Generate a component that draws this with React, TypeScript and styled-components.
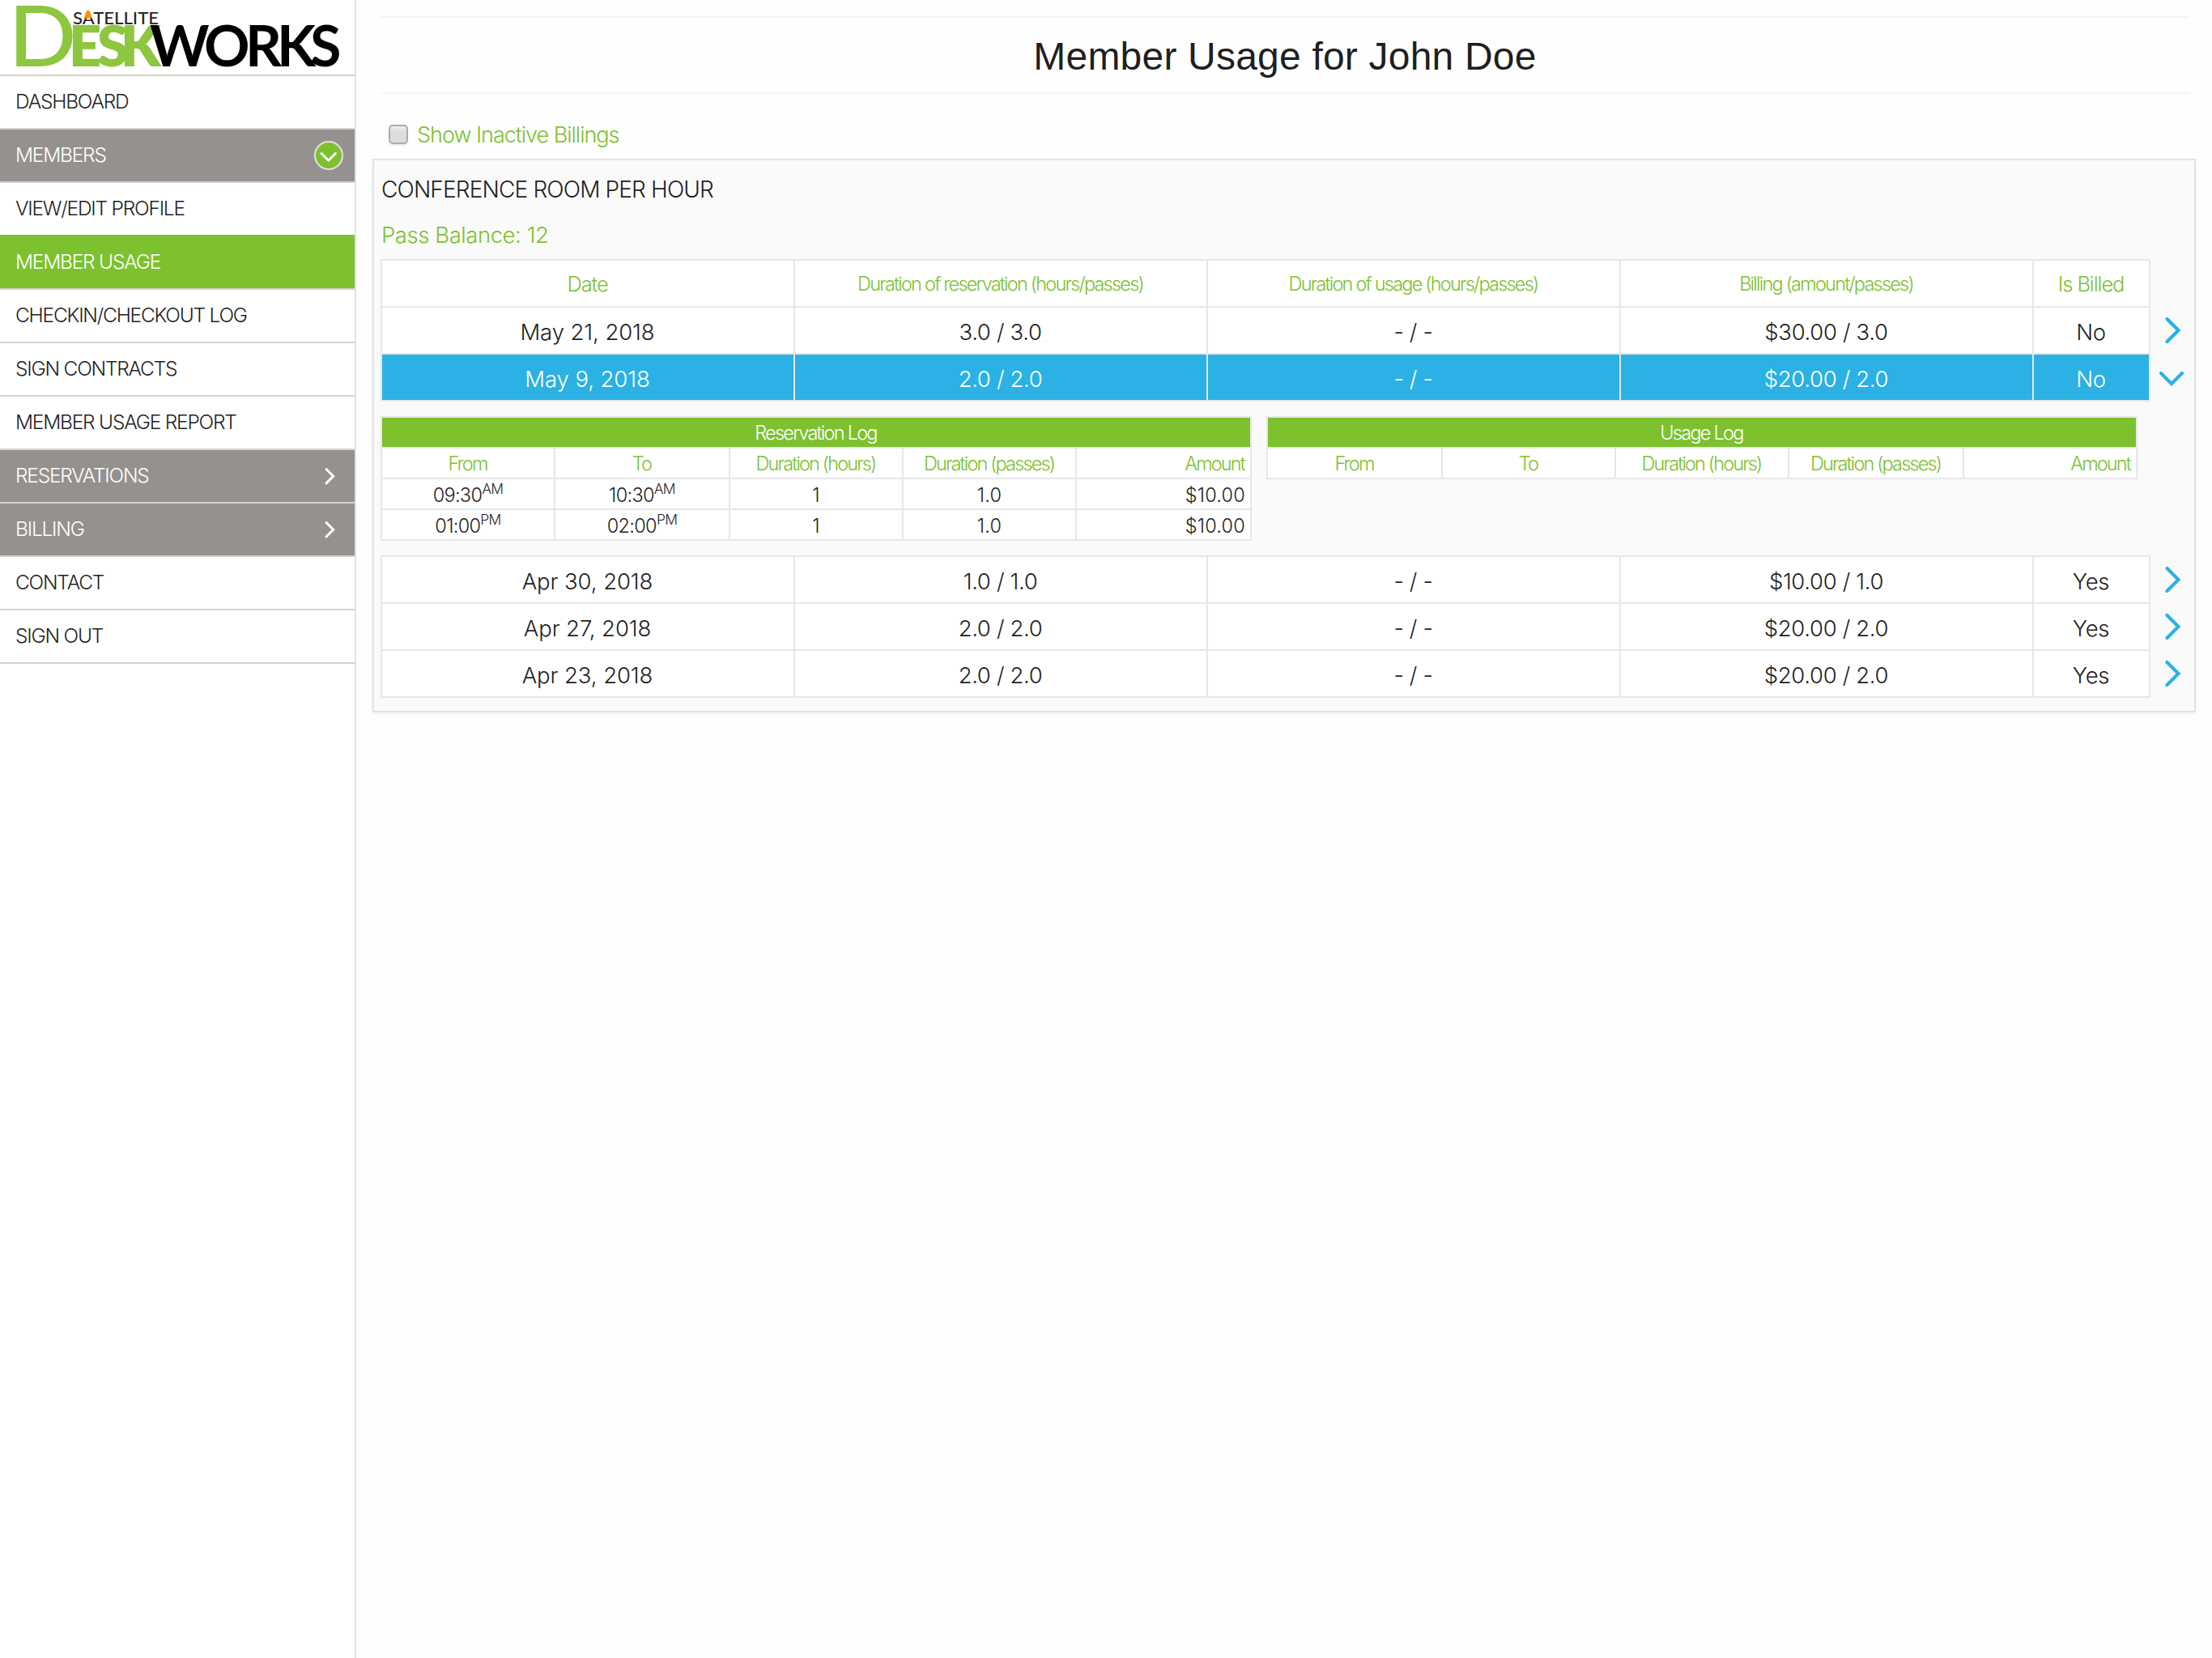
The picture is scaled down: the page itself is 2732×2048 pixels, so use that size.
import * as React from 'react';
import styled, { createGlobalStyle, css } from 'styled-components';

const palette = {
  green: '#7dc12f',
  blue: '#2bb1e3',
  gray: '#95918e',
  line: '#e6e7e8',
  navLine: '#d6d1ce',
  text: '#1f1f1f',
};

const GlobalStyle = createGlobalStyle`
  body {
    margin: 0;
    background: #fefefe;
    color: ${palette.text};
    font-family: Inter, 'Liberation Sans', sans-serif;
    font-weight: 260;
  }
  * {
    box-sizing: border-box;
  }
`;

const PageBlock = styled.div`
  display: flex;
  min-height: 100vh;
`;

/* sidebar */

const Sidebar = styled.aside`
  width: 440px;
  flex-shrink: 0;
  background: white;
  border-right: 2px solid #e2e2e2;
`;

const LogoBlock = styled.div`
  height: 94px;
  border-bottom: 2px solid ${palette.navLine};
  svg {
    display: block;
    overflow: visible;
  }
`;

type NavKind = 'plain' | 'group' | 'active';

const NavItem = styled.a<{ $kind: NavKind; $beforeActive: boolean }>`
  height: 66px;
  display: flex;
  align-items: center;
  justify-content: space-between;
  padding: 0 14px 2px 19px;
  font-size: 24.5px;
  letter-spacing: -1.22px;
  border-bottom: 2px solid
    ${props => (props.$beforeActive ? palette.green : palette.navLine)};
  ${props =>
    props.$kind !== 'plain' &&
    css`
      color: white;
      font-weight: 300;
      background: ${props.$kind === 'group' ? palette.gray : palette.green};
    `}
`;

const NavIcon = styled.svg`
  width: 36px;
  height: 36px;
  margin-top: 2px;
  fill: none;
  stroke: white;
  stroke-width: 3;
  stroke-linecap: round;
`;

/* content */

const Content = styled.main`
  flex: 1;
  padding: 20px 20px 0;
`;

const PageTitle = styled.h1`
  height: 96px;
  margin: 0 8px 0 10px;
  padding-top: 3px;
  display: flex;
  align-items: center;
  justify-content: center;
  border-top: 2px solid #f5f5f5;
  border-bottom: 2px solid #f5f5f5;
  font-family: 'Liberation Sans', Arial, sans-serif;
  font-size: 48px;
  font-weight: 400;
  letter-spacing: 0.2px;
`;

const FilterRow = styled.label`
  height: 80px;
  padding: 20px 0 0 20px;
  display: flex;
  align-items: center;
  gap: 11px;
  color: ${palette.green};
  font-size: 27px;
  font-weight: 300;
  letter-spacing: -1.02px;
`;

const Checkbox = styled.input`
  appearance: none;
  width: 24px;
  height: 24px;
  margin: 0;
  border: 2px solid #acacac;
  border-radius: 5px;
  background: linear-gradient(#ededed, #dcdcdc 40%, #dedede);
  box-shadow: 0 2px 1px rgba(0, 0, 0, 0.07);
`;

const Panel = styled.section`
  padding-bottom: 16px;
  padding-left: 8px;
  border: 2px solid #e3e3e3;
  background: #fafafa;
  box-shadow: 0 2px 5px rgba(0, 0, 0, 0.06);
`;

const PanelTitle = styled.h2`
  height: 64px;
  margin: 0;
  padding: 7px 0 0 1px;
  display: flex;
  align-items: center;
  font-size: 28px;
  font-weight: inherit;
  letter-spacing: -0.84px;
`;

const PassBalance = styled.div`
  height: 58px;
  padding: 0 0 2px 1px;
  display: flex;
  align-items: center;
  color: ${palette.green};
  font-size: 27.5px;
  font-weight: 300;
  letter-spacing: -0.45px;
`;

const Line = styled.div`
  display: flex;
`;

const Row = styled.div<{ $first?: boolean; $selected?: boolean }>`
  display: grid;
  grid-template-columns: 510px 510px 510px 510px 144px;
  border-left: 2px solid ${palette.line};
  border-top: ${props => (props.$first ? `2px solid ${palette.line}` : 'none')};
  background: ${props => (props.$selected ? palette.blue : 'white')};
  ${props =>
    props.$selected &&
    css`
      color: white;
      font-weight: 300;
    `}
`;

const Cell = styled.div<{ $tracking?: number }>`
  height: 58px;
  padding: 4px 1px 0 0;
  display: flex;
  align-items: center;
  justify-content: center;
  border-right: 2px solid ${palette.line};
  border-bottom: 2px solid ${palette.line};
  font-size: 27.5px;
  letter-spacing: ${props => props.$tracking ?? -0.35}px;
`;

const HeadCell = styled(Cell)<{ $small?: boolean }>`
  padding: ${props => (props.$small ? 0 : 1)}px 1px 0 0;
  color: ${palette.green};
  font-size: ${props => (props.$small ? 23.5 : 25.5)}px;
  font-weight: 300;
  letter-spacing: ${props => (props.$small ? -1.78 : -1.1)}px;
`;

const Toggle = styled.button<{ $first?: boolean }>`
  width: 54px;
  height: 56px;
  margin-top: ${props => (props.$first ? 2 : 0)}px;
  padding: 0;
  display: flex;
  align-items: center;
  justify-content: center;
  border: none;
  background: none;
  svg {
    width: 40px;
    height: 40px;
    fill: none;
    stroke: ${palette.blue};
    stroke-width: 4.2;
    stroke-linecap: round;
  }
`;

/* reservation / usage logs */

const Logs = styled.div`
  display: flex;
  align-items: flex-start;
  gap: 18px;
  padding: 18px 0;
`;

const Log = styled.div<{ $columns: string }>`
  display: grid;
  grid-template-columns: ${props => props.$columns};
  border-left: 2px solid ${palette.line};
  border-top: 2px solid ${palette.line};
  background: white;
  font-size: 23.5px;
`;

const LogTitle = styled.div`
  grid-column: 1 / -1;
  height: 38px;
  padding-right: 1px;
  display: flex;
  align-items: center;
  justify-content: center;
  border-right: 2px solid ${palette.line};
  border-bottom: 2px solid ${palette.line};
  background: ${palette.green};
  color: white;
  font-weight: 300;
  letter-spacing: -1.75px;
`;

const LogCell = styled.div<{ $right?: boolean }>`
  height: 38px;
  padding: 3px ${props => (props.$right ? 6 : 0)}px 0 0;
  display: flex;
  align-items: center;
  justify-content: ${props => (props.$right ? 'flex-end' : 'center')};
  border-right: 2px solid ${palette.line};
  border-bottom: 2px solid ${palette.line};
  letter-spacing: 0.2px;
`;

const LogHead = styled(LogCell)`
  padding: 0 ${props => (props.$right ? 7 : 1)}px 0 0;
  color: ${palette.green};
  font-weight: 300;
  letter-spacing: -1.85px;
`;

const TimeText = styled.span`
  letter-spacing: -0.7px;
  sup {
    font-size: 17.5px;
    line-height: 0;
    vertical-align: 10px;
  }
`;

function Logo() {
  return (
    <LogoBlock>
      <svg
        width="438"
        height="92"
        viewBox="0 0 438 92"
        fontFamily="Lato, sans-serif"
      >
        <g fill="#8dc63f">
          <text x="10.5" y="81.5" fontSize="104" fontWeight="500" textLength="84" lengthAdjust="spacingAndGlyphs">
            D
          </text>
          <text x="85 120 149" y="81.5" fontSize="70" fontWeight="800">
            ESK
          </text>
        </g>
        <text x="185 252 303 342 383" y="81.5" fontSize="70" fontWeight="700">
          WORKS
        </text>
        <text x="90" y="30" fontSize="21.5" fontWeight="500" fill="#2b2523" textLength="106" lengthAdjust="spacingAndGlyphs">
          SATELLITE
        </text>
        <path d="M107 13h3.5l3.5 9.5h-10.5z" fill="#ff9100" />
      </svg>
    </LogoBlock>
  );
}

interface NavEntry {
  label: string;
  kind?: NavKind;
  icon?: 'open' | 'closed';
}

const navItems: NavEntry[] = [
  { label: 'DASHBOARD' },
  { label: 'MEMBERS', kind: 'group', icon: 'open' },
  { label: 'VIEW/EDIT PROFILE' },
  { label: 'MEMBER USAGE', kind: 'active' },
  { label: 'CHECKIN/CHECKOUT LOG' },
  { label: 'SIGN CONTRACTS' },
  { label: 'MEMBER USAGE REPORT' },
  { label: 'RESERVATIONS', kind: 'group', icon: 'closed' },
  { label: 'BILLING', kind: 'group', icon: 'closed' },
  { label: 'CONTACT' },
  { label: 'SIGN OUT' },
];

interface Usage {
  date: string;
  reservation: string;
  billing: string;
  billed: string;
}

const recent: Usage[] = [
  { date: 'May 21, 2018', reservation: '3.0 / 3.0', billing: '$30.00 / 3.0', billed: 'No' },
  { date: 'May 9, 2018', reservation: '2.0 / 2.0', billing: '$20.00 / 2.0', billed: 'No' },
];

const older: Usage[] = [
  { date: 'Apr 30, 2018', reservation: '1.0 / 1.0', billing: '$10.00 / 1.0', billed: 'Yes' },
  { date: 'Apr 27, 2018', reservation: '2.0 / 2.0', billing: '$20.00 / 2.0', billed: 'Yes' },
  { date: 'Apr 23, 2018', reservation: '2.0 / 2.0', billing: '$20.00 / 2.0', billed: 'Yes' },
];

const reservations = [
  { from: ['09:30', 'AM'], to: ['10:30', 'AM'] },
  { from: ['01:00', 'PM'], to: ['02:00', 'PM'] },
];

const logHeads = ['From', 'To', 'Duration (hours)', 'Duration (passes)', 'Amount'];

interface UsageRowProps {
  usage: Usage;
  first?: boolean;
  open?: boolean;
}

function UsageRow({ usage, first, open }: UsageRowProps) {
  return (
    <Line>
      <Row $first={first} $selected={open}>
        <Cell $tracking={-0.08}>{usage.date}</Cell>
        <Cell>{usage.reservation}</Cell>
        <Cell>- / -</Cell>
        <Cell>{usage.billing}</Cell>
        <Cell>{usage.billed}</Cell>
      </Row>
      <Toggle $first={first}>
        <svg viewBox="0 0 40 40">
          <path d={open ? 'M6 15l13 13 13-13' : 'M13.5 6l14 14-14 14'} />
        </svg>
      </Toggle>
    </Line>
  );
}

function LogHeader({ title }: { title: string }) {
  return (
    <>
      <LogTitle>{title}</LogTitle>
      {logHeads.map(head => (
        <LogHead key={head} $right={head === 'Amount'}>
          {head}
        </LogHead>
      ))}
    </>
  );
}

function Time({ value }: { value: string[] }) {
  return (
    <TimeText>
      {value[0]}
      <sup>{value[1]}</sup>
    </TimeText>
  );
}

function App() {
  return (
    <PageBlock>
      <GlobalStyle />
      <Sidebar>
        <Logo />
        {navItems.map((item, i) => (
          <NavItem
            key={item.label}
            $kind={item.kind || 'plain'}
            $beforeActive={navItems[i + 1]?.kind === 'active'}
          >
            {item.label}
            {item.icon === 'open' && (
              <NavIcon viewBox="0 0 36 36">
                <circle cx="18" cy="18" r="17" fill={palette.green} stroke="#e2e0df" strokeWidth="2" />
                <path d="M9 15.5l8.7 8.7 8.7-8.7" />
              </NavIcon>
            )}
            {item.icon === 'closed' && (
              <NavIcon viewBox="0 0 36 36">
                <path d="M15 9.5l8.7 8.7-8.7 8.7" />
              </NavIcon>
            )}
          </NavItem>
        ))}
      </Sidebar>
      <Content>
        <PageTitle>Member Usage for John Doe</PageTitle>
        <FilterRow>
          <Checkbox type="checkbox" />
          Show Inactive Billings
        </FilterRow>
        <Panel>
          <PanelTitle>CONFERENCE ROOM PER HOUR</PanelTitle>
          <PassBalance>Pass Balance: 12</PassBalance>
          <Line>
            <Row $first>
              <HeadCell>Date</HeadCell>
              <HeadCell $small>Duration of reservation (hours/passes)</HeadCell>
              <HeadCell $small>Duration of usage (hours/passes)</HeadCell>
              <HeadCell $small>Billing (amount/passes)</HeadCell>
              <HeadCell>Is Billed</HeadCell>
            </Row>
          </Line>
          {recent.map((usage, i) => (
            <UsageRow key={usage.date} usage={usage} open={i === 1} />
          ))}
          <Logs>
            <Log $columns="214px 216px 214px 214px 216px">
              <LogHeader title="Reservation Log" />
              {reservations.map(item => (
                <React.Fragment key={item.from[0]}>
                  <LogCell>
                    <Time value={item.from} />
                  </LogCell>
                  <LogCell>
                    <Time value={item.to} />
                  </LogCell>
                  <LogCell>1</LogCell>
                  <LogCell>1.0</LogCell>
                  <LogCell $right>$10.00</LogCell>
                </React.Fragment>
              ))}
            </Log>
            <Log $columns="216px 214px 214px 216px 214px">
              <LogHeader title="Usage Log" />
            </Log>
          </Logs>
          {older.map((usage, i) => (
            <UsageRow key={usage.date} usage={usage} first={i === 0} />
          ))}
        </Panel>
      </Content>
    </PageBlock>
  );
}

export default App;
